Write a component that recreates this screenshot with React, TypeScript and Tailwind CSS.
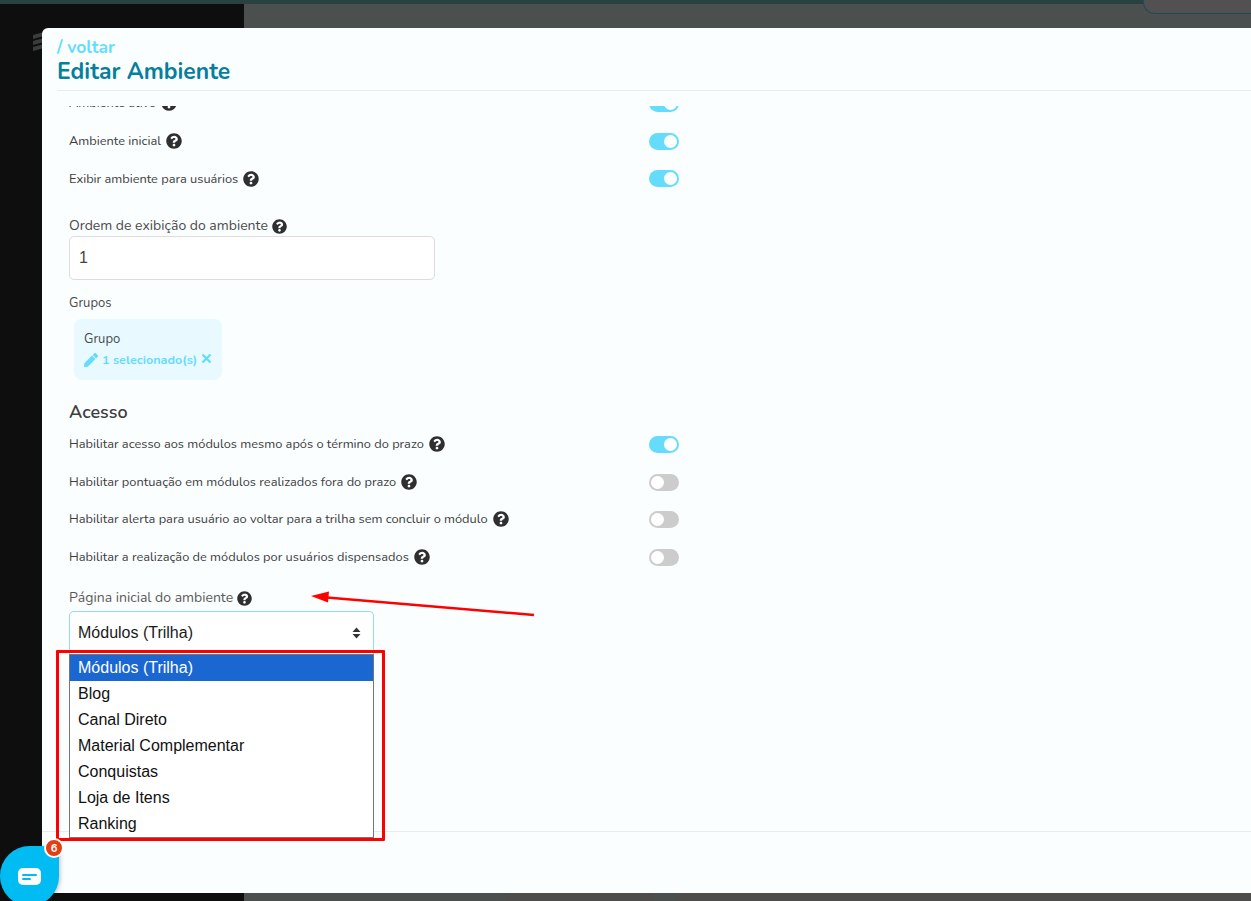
import React from "react";

const font = { fontFamily: '"Nunito", "Lato", "Open Sans", sans-serif' };

function Help({ size = 16 }: { size?: number }) {
  return (
    <svg width={size} height={size} viewBox="0 0 512 512" className="shrink-0" fill="#2f2f2f">
      <path d="M504 256c0 137-111 248-248 248S8 393 8 256 119 8 256 8s248 111 248 248zM262.700 90c-54.500 0-89.300 23-116.500 63.800-3.500 5.300-2.400 12.400 2.700 16.300l34.700 26.300c5.200 3.900 12.600 3 16.700-2.100 17.900-22.700 30.100-35.800 57.300-35.800 20.400 0 45.700 13.100 45.700 33 0 15-12.400 22.700-32.600 34-23.600 13.200-54.800 29.700-54.800 70.900V300c0 6.600 5.400 12 12 12h56c6.600 0 12-5.400 12-12v-1.300c0-28.600 83.500-29.800 83.500-107.200 0-58.300-60.500-102.500-116.700-102.500zM256 340c-25.400 0-46 20.600-46 46 0 25.400 20.600 46 46 46s46-20.600 46-46c0-25.400-20.600-46-46-46z" />
    </svg>
  );
}

function Toggle({ on }: { on: boolean }) {
  return (
    <span
      className={`flex h-[17px] w-[30px] shrink-0 items-center rounded-full px-[2px] ${
        on ? "justify-end bg-[#66dcfd]" : "justify-start bg-[#cccccc]"
      }`}
    >
      <span className="h-[13px] w-[13px] rounded-full bg-white" />
    </span>
  );
}

function Row({ label, on, cls }: { label: string; on: boolean; cls: string }) {
  return (
    <div className={`flex w-[610px] items-center justify-between ${cls}`}>
      <span className="flex items-center gap-[5px] text-[12.800px] leading-[18px] text-[#3d3d3d]">
        {label}
        <Help />
      </span>
      <Toggle on={on} />
    </div>
  );
}

const options = [
  "Módulos (Trilha)",
  "Blog",
  "Canal Direto",
  "Material Complementar",
  "Conquistas",
  "Loja de Itens",
  "Ranking",
];

export default function App() {
  return (
    <div className="relative h-[901px] w-[1251px] overflow-hidden bg-[#4b4f4e]" style={font}>
      <div className="h-[4px] w-full bg-[#2a423f]" />
      <div className="flex h-[897px]">
        <div className="h-full w-[244px] bg-[#0e0e0e]" />
        <div className="relative flex-1">
          <div className="absolute right-[-20px] top-[-4px] h-[14px] w-[128px] rounded-bl-[12px] border-b border-l border-[#1f4a55] bg-[#525050]" />
          <div className="absolute bottom-0 left-[262px] h-[8px] w-[148px] rounded-t-[10px] bg-[#4f4d4c]" />
          <div className="absolute bottom-0 left-[432px] right-0 h-[8px] rounded-tl-[10px] bg-[#4f4d4c]" />
        </div>
      </div>

      {/* logo glyph behind the dialog */}
      <svg className="absolute left-[32px] top-[31px]" width="12" height="22" viewBox="0 0 12 22" fill="#3c3c3c">
        <path d="M1 4 L12 1 V5 L1 8Z" />
        <path d="M1 10 L12 7 V11 L1 14Z" />
        <path d="M1 16 L12 13 V17 L1 20Z" />
      </svg>

      {/* dialog */}
      <div className="absolute left-[42px] top-[28px] flex h-[865px] w-[1209px] flex-col rounded-tl-[6px] bg-[#fbfeff]">
        <div className="ml-[15px] h-[63px] shrink-0 border-b border-[#e8ecef] pt-[9px]">
          <div className="text-[17.500px] font-bold leading-[20px] text-[#66dcfd]">/ voltar</div>
          <div className="mt-[1px] text-[22.900px] font-bold leading-[28px] text-[#067f9c]">Editar Ambiente</div>
        </div>

        <div className="mt-[15px] flex-1 overflow-hidden pl-[27px]">
          <div className="mt-[-12px]">
            <Row label="Ambiente ativo" on cls="h-[18px]" />
            <Row label="Ambiente inicial" on cls="mt-[20px] h-[18px]" />
            <Row label="Exibir ambiente para usuários" on cls="mt-[19px] h-[19px]" />

            <div className="mt-[29px] flex items-center gap-[4px] text-[14px] leading-[18px] text-[#4a4a4a]">
              Ordem de exibição do ambiente
              <Help size={15} />
            </div>
            <div className="mt-[1px] flex h-[44px] w-[366px] items-center rounded-[5px] border border-[#dcdcdc] bg-white pl-[9px] text-[16px] text-[#444444]" style={{ fontFamily: '"Liberation Sans", sans-serif' }}>
              1
            </div>

            <div className="mt-[14px] text-[13px] leading-[18px] text-[#4a4a4a]">Grupos</div>
            <div className="ml-[5px] mt-[7px] h-[61px] w-[148px] rounded-[8px] bg-[#e8faff] pl-[10px] pt-[11px]">
              <div className="text-[13px] leading-[18px] text-[#4a4a4a]">Grupo</div>
              <div className="mt-[3px] flex items-center text-[12.600px] font-bold leading-[18px] text-[#66dcfd]">
                <svg width="14" height="14" viewBox="0 0 512 512" fill="#66dcfd" className="mr-[4px]">
                  <path d="M290.700 93.200l128 128-278 278-114.100 12.600C11.300 513.500-1.600 500.600.100 485.300l12.700-114.200 277.900-277.900zm207.200-19.100l-60.100-60.100c-18.800-18.700-49.100-18.700-67.900 0l-56.500 56.500 128 128 56.500-56.500c18.800-18.800 18.800-49.100 0-67.900z" />
                </svg>
                1 selecionado(s)
                <svg width="11" height="11" viewBox="0 0 11 11" className="ml-[4px] mt-[-3px]" stroke="#66dcfd" strokeWidth="2.400">
                  <path d="M1.500 1.500l8 8M9.500 1.500l-8 8" />
                </svg>
              </div>
            </div>

            <div className="mt-[20px] text-[18px] font-semibold leading-[24px] text-[#3d3d3d]">Acesso</div>
            <Row label="Habilitar acesso aos módulos mesmo após o término do prazo" on cls="mt-[11px] h-[18px]" />
            <Row label="Habilitar pontuação em módulos realizados fora do prazo" on={false} cls="mt-[20px] h-[18px]" />
            <Row label="Habilitar alerta para usuário ao voltar para a trilha sem concluir o módulo" on={false} cls="mt-[19px] h-[18px]" />
            <Row label="Habilitar a realização de módulos por usuários dispensados" on={false} cls="mt-[20px] h-[18px]" />

            <div className="mt-[23px] flex items-center gap-[4px] text-[14px] leading-[18px] text-[#5a5a5a]">
              Página inicial do ambiente
              <Help size={15} />
            </div>
            <div className="mt-[4px] flex h-[43px] w-[305px] items-center justify-between rounded-t-[5px] border border-b-0 border-[#8fdcf3] bg-white pl-[8px] pr-[12px] text-[16px] text-[#1a1a1a]" style={{ fontFamily: '"Liberation Sans", sans-serif' }}>
              Módulos (Trilha)
              <svg width="9" height="12" viewBox="0 0 9 12" fill="#333333">
                <path d="M4.500 0.500L8.500 5H0.500zM4.500 11.500L0.500 7H8.500z" />
              </svg>
            </div>
          </div>
        </div>

        <div className="h-[62px] shrink-0 border-t border-[#e8ecef]" />
      </div>

      {/* open select list */}
      <div className="absolute left-[69px] top-[654px] w-[305px] border border-[#767676] bg-white text-[16px] text-[#111111]" style={{ fontFamily: '"Liberation Sans", sans-serif' }}>
        {options.map((o, i) => (
          <div key={o} className={`h-[26px] pl-[8px] leading-[25px] ${i === 0 ? "bg-[#1a67d2] text-white" : ""}`}>
            {o}
          </div>
        ))}
      </div>

      {/* annotations */}
      <div className="absolute left-[56px] top-[650px] h-[191px] w-[329px] rounded-[1px] border-[3px] border-[#ff0000]" />
      <svg className="absolute left-[305px] top-[585px]" width="235" height="36" viewBox="0 0 235 36">
        <path d="M229 30 L22 12.500" stroke="#ff0000" strokeWidth="2.500" fill="none" />
        <path d="M6 11 L24 6.500 L23 17.500 Z" fill="#ff0000" />
      </svg>

      {/* chat bubble */}
      <div className="absolute left-0 top-[846px] flex h-[60px] w-[59px] items-center justify-center rounded-[30px] rounded-tr-[6px] bg-[#00bcf2] shadow-[1px_1px_4px_rgba(0,0,0,0.25)]">
        <svg width="23" height="18" viewBox="0 0 23 18" className="mt-[2px]">
          <rect x="0" y="0" width="23" height="17" rx="5" fill="#ffffff" />
          <rect x="4" y="6" width="15" height="2" rx="1" fill="#00bcf2" />
          <rect x="4" y="10" width="9" height="2" rx="1" fill="#00bcf2" />
        </svg>
      </div>
      <div className="absolute left-[44px] top-[838px] flex h-[20px] w-[20px] items-center justify-center rounded-full border-[2px] border-white bg-[#e23f12] text-[11px] font-bold leading-none text-white">
        6
      </div>
    </div>
  );
}
